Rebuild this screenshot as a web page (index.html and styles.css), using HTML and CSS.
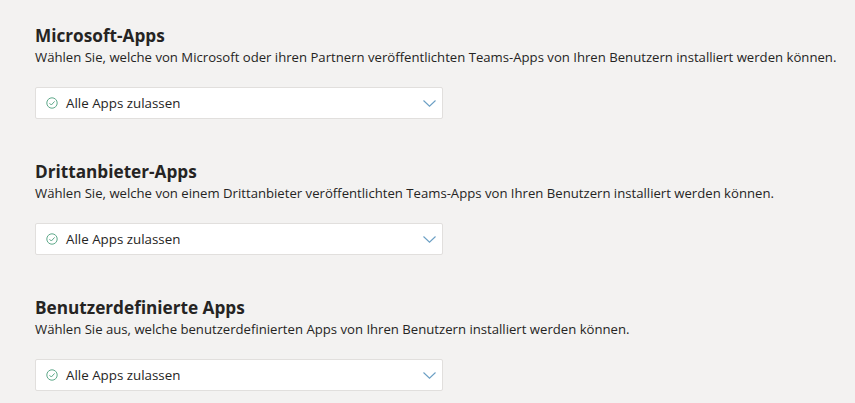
FILE: index.html
```html
<!DOCTYPE html>
<html lang="en">
<head>
    <meta charset="UTF-8">
    <title>Teams-Apps</title>
    <link rel="stylesheet" href="styles.css">
</head>
<body>
<div class="page">
    <section class="group">
        <h2>Microsoft-Apps</h2>
        <p>Wählen Sie, welche von Microsoft oder ihren Partnern veröffentlichten Teams-Apps von Ihren Benutzern installiert werden können.</p>
        <div class="dropdown">
            <svg class="check" width="12" height="12" viewBox="0 0 12 12"><circle cx="6" cy="6" r="5.2"/><path d="M3.5 6.2 5.3 8 8.6 4.4"/></svg>
            <span class="value">Alle Apps zulassen</span>
            <svg class="chevron" width="13" height="7" viewBox="0 0 13 7"><path d="M.5.5 6.5 6.2 12.5.5"/></svg>
        </div>
    </section>
    <section class="group">
        <h2>Drittanbieter-Apps</h2>
        <p>Wählen Sie, welche von einem Drittanbieter veröffentlichten Teams-Apps von Ihren Benutzern installiert werden können.</p>
        <div class="dropdown">
            <svg class="check" width="12" height="12" viewBox="0 0 12 12"><circle cx="6" cy="6" r="5.2"/><path d="M3.5 6.2 5.3 8 8.6 4.4"/></svg>
            <span class="value">Alle Apps zulassen</span>
            <svg class="chevron" width="13" height="7" viewBox="0 0 13 7"><path d="M.5.5 6.5 6.2 12.5.5"/></svg>
        </div>
    </section>
    <section class="group">
        <h2>Benutzerdefinierte Apps</h2>
        <p>Wählen Sie aus, welche benutzerdefinierten Apps von Ihren Benutzern installiert werden können.</p>
        <div class="dropdown">
            <svg class="check" width="12" height="12" viewBox="0 0 12 12"><circle cx="6" cy="6" r="5.2"/><path d="M3.5 6.2 5.3 8 8.6 4.4"/></svg>
            <span class="value">Alle Apps zulassen</span>
            <svg class="chevron" width="13" height="7" viewBox="0 0 13 7"><path d="M.5.5 6.5 6.2 12.5.5"/></svg>
        </div>
    </section>
</div>
</body>
</html>
```
FILE: styles.css
```css
* {
    margin: 0;
    padding: 0;
    box-sizing: border-box;
}

html, body {
    height: 100%;
    overflow: hidden;
}

body {
    background-color: #f3f2f1;
    color: #252423;
    font-family: 'Open Sans', 'Noto Sans', sans-serif;
}

.page {
    padding: 25px 0 0 35px;
    display: flex;
    flex-direction: column;
    gap: 41px;
}

.group {
    height: 95px;
}

h2 {
    font-size: 17.2px;
    font-weight: 700;
    line-height: 22px;
    white-space: nowrap;
}

p {
    margin-top: 1px;
    font-size: 13.15px;
    line-height: 18px;
    white-space: nowrap;
}

.dropdown {
    width: 408px;
    height: 32px;
    margin-top: 21px;
    padding: 0 6px 0 10px;
    display: flex;
    align-items: center;
    background-color: #fff;
    border: 1px solid #e1dfdd;
    border-radius: 2px;
}

.check {
    fill: none;
    stroke: #5fa98a;
    stroke-width: 1;
    flex-shrink: 0;
}

.value {
    margin-left: 8px;
    font-size: 13.35px;
    flex: 1;
}

.chevron {
    fill: none;
    stroke: #6b9fc4;
    stroke-width: 1.1;
}
```
